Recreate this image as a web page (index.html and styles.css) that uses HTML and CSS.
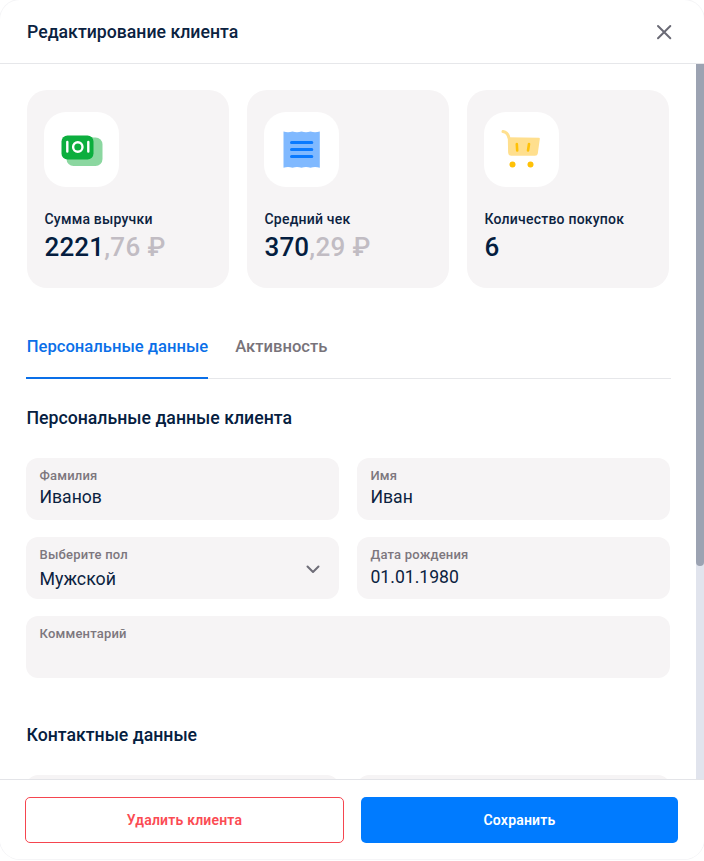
FILE: index.html
```html
<!DOCTYPE html>
<html lang="ru">
<head>
<meta charset="utf-8">
<title>Редактирование клиента</title>
<link rel="stylesheet" href="styles.css">
</head>
<body>
<div class="modal">
  <header class="modal-head">
    <h1 class="modal-title">Редактирование клиента</h1>
    <button class="close" aria-label="Закрыть">
      <svg width="16" height="16" viewBox="0 0 16 16"><path d="M2 2L14.300 14.300M14.300 2L2 14.300" stroke="#6b6b76" stroke-width="2" fill="none" stroke-linecap="round"/></svg>
    </button>
  </header>
  <div class="modal-body">
    <div class="scroll-content">
      <section class="stats">
        <div class="stat">
          <div class="stat-icon">
            <svg width="44" height="44" viewBox="0 0 44 44">
              <rect x="7.500" y="9.500" width="36" height="28.500" rx="7" fill="#8bd7a0"/>
              <rect x="2.500" y="7.500" width="32" height="24" rx="6" fill="#0cae3e"/>
              <path d="M8.300 14V23.500M29.300 14V23.500" stroke="#fff" stroke-width="2.400" stroke-linecap="round"/>
              <circle cx="18.800" cy="19" r="4.700" fill="none" stroke="#fff" stroke-width="2.400"/>
            </svg>
          </div>
          <div class="stat-label">Сумма выручки</div>
          <div class="stat-value">2221<span class="muted">,76 ₽</span></div>
        </div>
        <div class="stat">
          <div class="stat-icon">
            <svg width="44" height="44" viewBox="0 0 44 44">
              <path d="M4.500 3.500q4.500 1.500 9 0q4.500 1.500 9 0q4.500 1.500 9 0q4.500 1.500 9.300 0V39.800q-4.800 -1.500 -9.300 0q-4.500 -1.500 -9 0q-4.500 -1.500 -9 0q-4.500 -1.500 -9 0z" fill="#80b9ff"/>
              <path d="M12.500 14.500H32.800M12.500 21.500H32.800M12.500 28.500H32.800" stroke="#0a7aff" stroke-width="3" stroke-linecap="round"/>
            </svg>
          </div>
          <div class="stat-label">Средний чек</div>
          <div class="stat-value">370<span class="muted">,29 ₽</span></div>
        </div>
        <div class="stat">
          <div class="stat-icon">
            <svg width="44" height="44" viewBox="0 0 44 44">
              <path d="M4 3.500C7 4 9 5.500 9.800 9.500" fill="none" stroke="#ffe08f" stroke-width="3" stroke-linecap="round"/>
              <path d="M8.800 9.200L40 9.700Q41 9.800 40.800 11L38.800 25.500Q38.500 27.800 36 27.800H12.500Q9.200 27.800 9.100 24.500z" fill="#ffdf8e"/>
              <path d="M17.800 16L18.200 22.500M30 16L29 22.500" stroke="#ffc107" stroke-width="2.600" stroke-linecap="round"/>
              <circle cx="13.500" cy="36.500" r="3" fill="#ffc107"/>
              <circle cx="31.500" cy="36.500" r="3" fill="#ffc107"/>
            </svg>
          </div>
          <div class="stat-label">Количество покупок</div>
          <div class="stat-value">6</div>
        </div>
      </section>

      <nav class="tabs">
        <a class="tab tab-active">Персональные данные</a>
        <a class="tab">Активность</a>
      </nav>

      <h2 class="section-title section-first">Персональные данные клиента</h2>
      <div class="form-grid">
        <div class="field"><div class="field-label">Фамилия</div><div class="field-value">Иванов</div></div>
        <div class="field"><div class="field-label">Имя</div><div class="field-value">Иван</div></div>
        <div class="field">
          <div class="field-label">Выберите пол</div><div class="field-value select-value">Мужской</div>
          <svg class="chevron" width="14" height="9" viewBox="0 0 14 9"><path d="M1.500 1.500L7 7L12.500 1.500" fill="none" stroke="#6f6d78" stroke-width="2" stroke-linecap="round" stroke-linejoin="round"/></svg>
        </div>
        <div class="field"><div class="field-label">Дата рождения</div><div class="field-value date-value">01.01.1980</div></div>
        <div class="field field-wide"><div class="field-label">Комментарий</div></div>
      </div>

      <h2 class="section-title section-next">Контактные данные</h2>
      <div class="form-grid">
        <div class="field"></div>
        <div class="field"></div>
      </div>
    </div>
    <div class="scrollbar"><div class="scrollbar-thumb"></div></div>
  </div>
  <footer class="modal-foot">
    <button class="btn btn-danger">Удалить клиента</button>
    <button class="btn btn-primary">Сохранить</button>
  </footer>
</div>
</body>
</html>
```
FILE: styles.css
```css
* { box-sizing: border-box; }
html, body { margin: 0; height: 100%; background: #fff; overflow: hidden; }
body { font-family: Roboto, "Liberation Sans", sans-serif; color: #0b2240; }
.modal { height: 859px; display: flex; flex-direction: column; background: #fff; border-radius: 20px; overflow: hidden; box-shadow: 0 0 0 1px #f5f5f7; }
.modal-head { height: 64px; flex: none; display: flex; align-items: center; justify-content: space-between; padding: 0 32px 0 27px; border-bottom: 1px solid #e6e7ea; }
.modal-title { margin: 0; font-size: 17.700px; font-weight: 500; line-height: 24px; color: #0b2240; }
.close { border: 0; background: none; padding: 0; width: 16px; height: 16px; display: block; line-height: 0; }
.modal-body { flex: 1; min-height: 0; display: flex; overflow: hidden; }
.scroll-content { flex: 1; min-width: 0; padding: 26px 25px 0 25.700px; overflow: hidden; }
.scrollbar { width: 8px; flex: none; background: #e1e4ed; }
.scrollbar-thumb { height: 502px; background: #9ca3b2; border-radius: 0 0 4px 4px; }
.stats { display: grid; grid-template-columns: repeat(3, 202px); column-gap: 18px; margin-left: 1.300px; }
.stat { height: 198px; background: #f6f4f5; border-radius: 20px; padding: 22px 17px 0; }
.stat-icon { width: 75px; height: 75px; background: #fff; border-radius: 22px; display: flex; align-items: center; justify-content: center; }
.stat-label { margin-top: 23px; font-size: 14px; line-height: 18px; font-weight: 500; letter-spacing: 0.220px; color: #0b2240; padding-left: 0.500px; }
.stat-value { margin-top: 3px; font-size: 26px; line-height: 32px; font-weight: 500; letter-spacing: 0.150px; color: #041d3f; padding-left: 0.500px; }
.muted { color: #c1bcc3; letter-spacing: 0.350px; }
.tabs { display: flex; gap: 27px; margin-top: 42px; height: 49px; border-bottom: 1px solid #e6e7ea; }
.tab { display: block; height: 49px; padding-top: 7px; font-size: 16.620px; line-height: 20px; font-weight: 500; color: #78737a; }
.tab:first-child { padding-left: 1px; }
.tab-active { color: #0a6fe8; border-bottom: 2px solid #0a6fe8; }
.section-title { margin: 0; font-size: 17.700px; line-height: 24px; font-weight: 500; color: #05203f; padding-left: 0.800px; }
.section-first { margin-top: 27px; }
.section-next { margin-top: 45px; }
.form-grid { display: grid; grid-template-columns: 313.400px 313.400px; gap: 17px 17.600px; margin-top: 28px; }
.field { position: relative; height: 62px; background: #f6f4f5; border-radius: 12px; padding: 10px 14px 0 13.800px; }
.field-wide { grid-column: 1 / -1; }
.field-label { font-size: 13px; line-height: 16px; font-weight: 500; letter-spacing: 0.200px; color: #7d777e; }
.field-value { font-size: 17.600px; line-height: 24px; margin-top: 1px; color: #0b2240; }
.date-value { margin-top: 2px; }
.select-value { margin-top: 3.500px; font-size: 17.800px; }
.chevron { position: absolute; right: 19px; top: 28px; }
.modal-foot { height: 80px; flex: none; display: flex; gap: 17px; padding: 17px 26px 0 25px; border-top: 1px solid #e3e4e8; background: #fff; }
.btn { width: 319px; height: 46px; border-radius: 5px; font-family: inherit; font-size: 14px; font-weight: 600; letter-spacing: 0.200px; }
.btn-danger { background: #fff; border: 1px solid #f5454f; color: #fb4b53; }
.btn-primary { width: 317px; background: #007bff; border: 0; color: #fff; }
```
